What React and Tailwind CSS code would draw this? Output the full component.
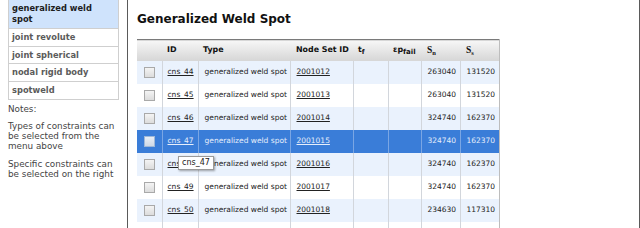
import React from "react";

const rows = [
  { id: "cns_44", ns: "2001012", sn: "263040", ss: "131520" },
  { id: "cns_45", ns: "2001013", sn: "263040", ss: "131520" },
  { id: "cns_46", ns: "2001014", sn: "324740", ss: "162370" },
  { id: "cns_47", ns: "2001015", sn: "324740", ss: "162370", sel: true },
  { id: "cns_48", ns: "2001016", sn: "324740", ss: "162370" },
  { id: "cns_49", ns: "2001017", sn: "324740", ss: "162370" },
  { id: "cns_50", ns: "2001018", sn: "234630", ss: "117310" },
  { id: "", ns: "", sn: "", ss: "", blank: true },
];

function Check({ sel }) {
  return (
    <span
      className={
        "inline-block w-[11px] h-[11px] border align-middle " +
        (sel
          ? "border-[#9fb8d8] bg-gradient-to-b from-[#e8eef6] to-[#cfd9e6]"
          : "border-[#a9a9a9] bg-gradient-to-b from-[#f4f4f4] to-[#dcdcdc]")
      }
    />
  );
}

export default function App() {
  const font = { fontFamily: '"DejaVu Sans", Verdana, sans-serif' };
  return (
    <div className="w-[640px] h-[228px] flex bg-white overflow-hidden" style={font}>
      <div className="w-[128px] shrink-0 border-r border-[#5a5a5a] h-full">
        <div className="ml-[8px] w-[111px] border-x border-b border-[#cfcfcf] text-[8.3px] font-bold">
          <div className="bg-[#cfe3fc] text-[#1d1d1d] px-[3px] pt-[3px] leading-[11px] h-[29px] border-b border-[#cfcfcf]">
            generalized weld
            <br />
            spot
          </div>
          {["joint revolute", "joint spherical", "nodal rigid body", "spotweld"].map((t, i) => (
            <div
              key={t}
              className={
                "text-[#5b5b5b] px-[3px] h-[17.5px] flex items-center " +
                (i < 3 ? "border-b border-[#cfcfcf]" : "")
              }
            >
              {t}
            </div>
          ))}
        </div>
        <div className="ml-[8px] text-[8.8px] leading-[10px] text-[#444]">
          <p className="mt-[4px]">Notes:</p>
          <p className="mt-[7px]">
            Types of constraints can
            <br />
            be selected from the
            <br />
            menu above
          </p>
          <p className="mt-[8px]">
            Specific constraints can
            <br />
            be selected on the right
          </p>
        </div>
      </div>
      <div className="flex-1 border-r border-[#5a5a5a] pl-[9px] relative">
        <h1 className="text-[12px] font-bold text-[#111] mt-[11px] h-[28px] leading-[16px]">
          Generalized Weld Spot
        </h1>
        <table className="border-collapse table-fixed w-[362px] text-[7.5px] text-[#222]">
          <colgroup>
            <col className="w-[25px]" />
            <col className="w-[36px]" />
            <col className="w-[92px]" />
            <col className="w-[63px]" />
            <col className="w-[35px]" />
            <col className="w-[33px]" />
            <col className="w-[39px]" />
            <col className="w-[39px]" />
          </colgroup>
          <thead>
            <tr className="h-[21px] bg-gradient-to-b from-[#f6f6f6] to-[#d6d6d6] border-t border-[#7a7a7a] text-[7.9px] font-bold text-[#111]">
              <th />
              <th className="text-left pl-[5px]">ID</th>
              <th className="text-left pl-[5px]">Type</th>
              <th className="text-left pl-[6px]">Node Set ID</th>
              <th className="text-left pl-[5px]">
                t<sub className="text-[6.5px]">f</sub>
              </th>
              <th className="text-left pl-[5px]">
                εp<sub className="text-[7px]">fail</sub>
              </th>
              <th className="text-left pl-[6px]" style={{ fontFamily: '"Liberation Serif", serif' }}>
                <span className="text-[9.5px]">S</span>
                <sub className="text-[6.5px]">n</sub>
              </th>
              <th className="text-left pl-[6px] border-r border-[#bdbdbd]" style={{ fontFamily: '"Liberation Serif", serif' }}>
                <span className="text-[9.5px]">S</span>
                <sub className="text-[6.5px]">s</sub>
              </th>
            </tr>
          </thead>
          <tbody>
            {rows.map((r, i) => {
              const bg = r.sel ? "bg-[#3a7dd8] text-[#e6eefb]" : i % 2 === 0 ? "bg-[#eaf2fd]" : "bg-white";
              const bd = r.sel ? "border-r border-[#7aa6e4]" : "border-r border-[#d2d6dc]";
              return (
                <tr key={i} className={"h-[23px] " + bg}>
                  <td className={"text-center " + bd}>{!r.blank && <Check sel={r.sel} />}</td>
                  <td className={"pl-[5px] " + bd}>
                    {!r.blank && <span className="underline">{r.id}</span>}
                  </td>
                  <td className={"pl-[6px] " + bd}>{!r.blank && "generalized weld spot"}</td>
                  <td className={"pl-[6px] " + bd}>
                    {!r.blank && <span className="underline">{r.ns}</span>}
                  </td>
                  <td className={bd} />
                  <td className={bd} />
                  <td className={"pl-[6px] " + bd}>{r.sn}</td>
                  <td className={"pl-[6px] border-r border-[#bdbdbd]"}>{r.ss}</td>
                </tr>
              );
            })}
          </tbody>
        </table>
        <div className="absolute left-[50px] top-[156px] bg-white border border-[#9a9a9a] shadow-[1px_1px_2px_rgba(0,0,0,0.35)] px-[3px] h-[14px] flex items-center text-[8px] text-[#222]">
          cns_47
        </div>
      </div>
    </div>
  );
}
